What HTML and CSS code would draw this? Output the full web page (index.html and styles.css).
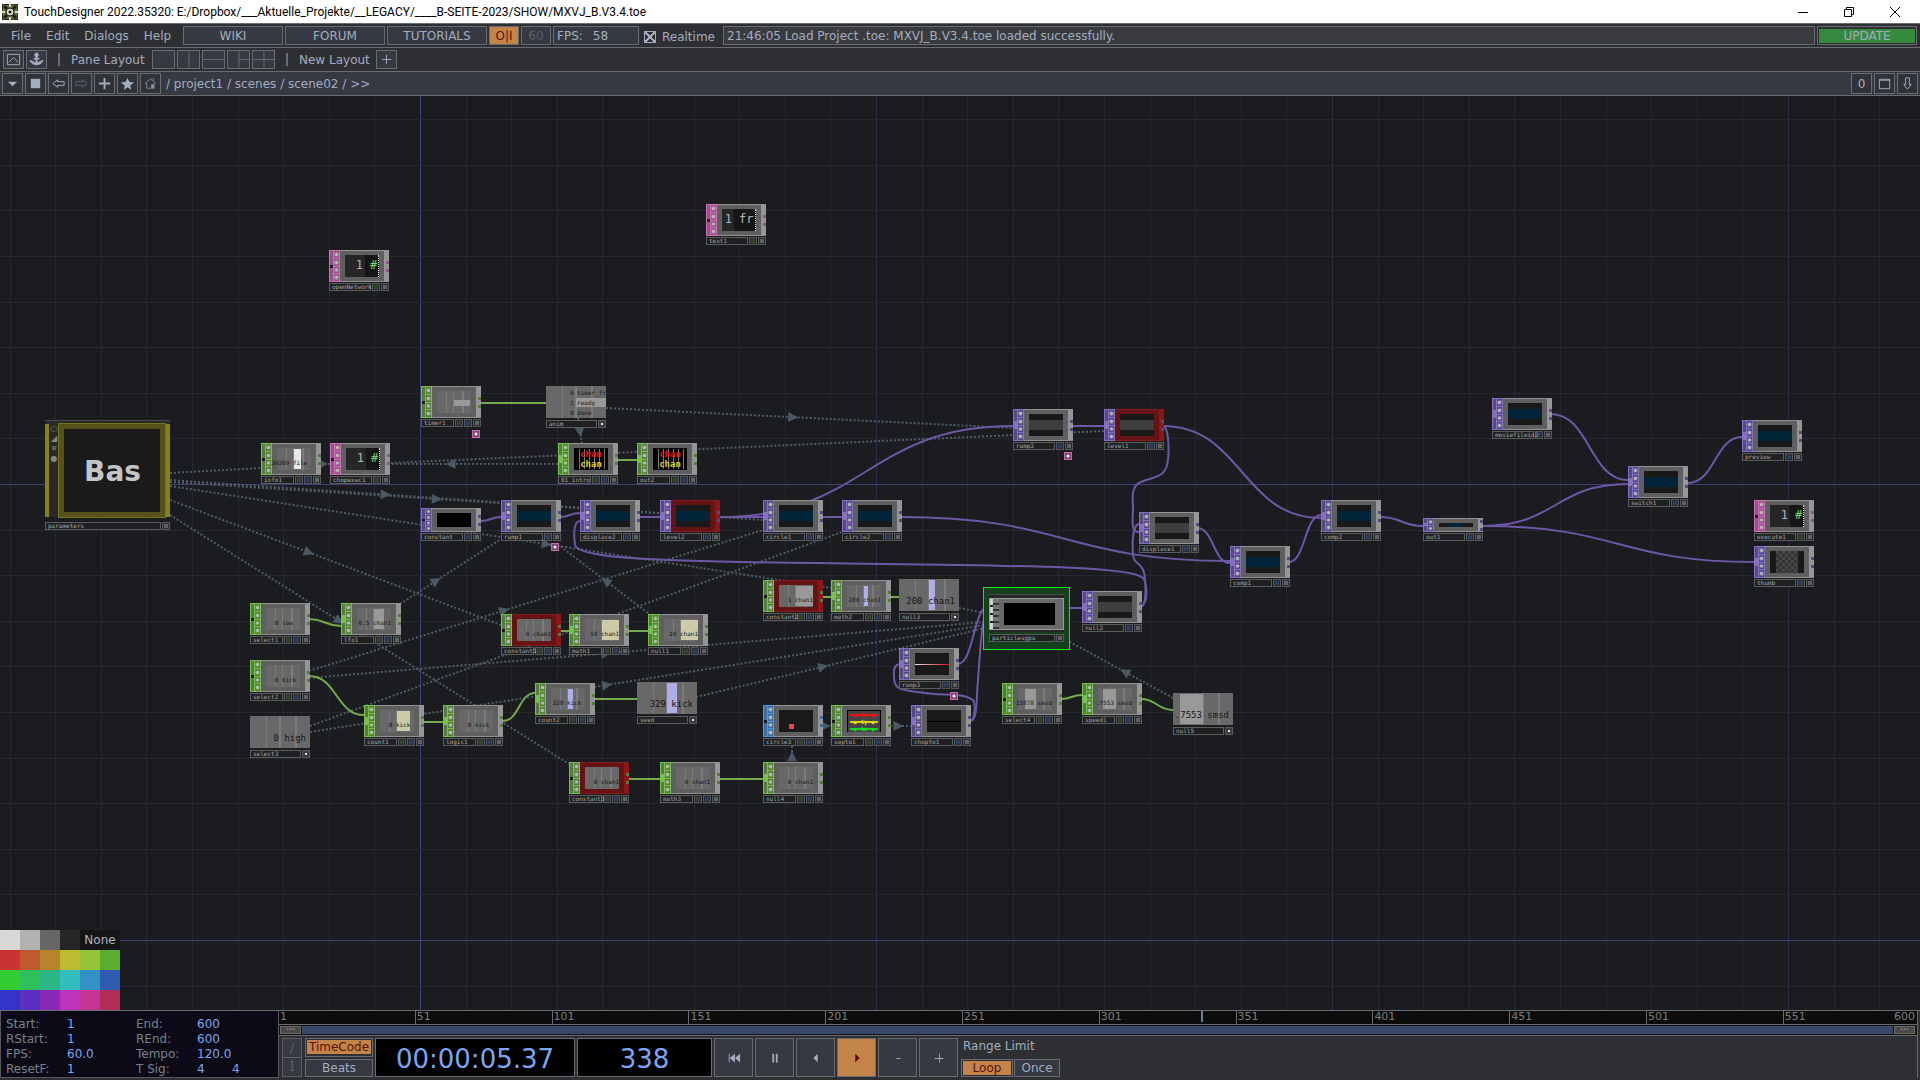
FILE: index.html
```html
<!DOCTYPE html>
<html lang="en">
<head>
    <meta charset="UTF-8">
    <meta name="viewport" content="width=device-width, initial-scale=1.0">
    <title>TouchDesigner</title>
    <link rel="stylesheet" href="styles.css">
</head>
<body>
    <!-- Window title bar -->
    <header class="titlebar">
        <svg class="app-icon" viewBox="0 0 16 16">
            <rect width="16" height="16" fill="#5f6f3f"/>
            <path d="M2 2l12 12M14 2L2 14" stroke="#1b2010" stroke-width="3"/>
            <circle cx="8" cy="8" r="4" fill="#d8dcc8" stroke="#1b2010" stroke-width="1"/>
            <circle cx="8" cy="8" r="1" fill="#1b2010"/>
            <path d="M8 0v3M8 13v3M0 8h3M13 8h3" stroke="#d8dcc8" stroke-width="2"/>
        </svg>
        <h1>TouchDesigner 2022.35320: E:/Dropbox/___Aktuelle_Projekte/__LEGACY/____B-SEITE-2023/SHOW/MXVJ_B.V3.4.toe</h1>
        <div class="window-buttons">
            <button aria-label="Minimize"><svg viewBox="0 0 10 10"><path d="M0 5.500h10"/></svg></button>
            <button aria-label="Restore"><svg viewBox="0 0 10 10"><path d="M.5 2.500h7v7h-7zM2.500 2.500v-2h7v7h-2"/></svg></button>
            <button aria-label="Close"><svg viewBox="0 0 10 10"><path d="M0 0l10 10M10 0L0 10"/></svg></button>
        </div>
    </header>

    <!-- Main menu -->
    <div class="row menu-row">
        <nav class="menu">
            <a href="#">File</a>
            <a href="#">Edit</a>
            <a href="#">Dialogs</a>
            <a href="#">Help</a>
        </nav>
        <button class="box wide">WIKI</button>
        <button class="box wide">FORUM</button>
        <button class="box wide">TUTORIALS</button>
        <button class="box on power">O|I</button>
        <button class="box dim power">60</button>
        <div class="box fps"><span>FPS:</span><span>58</span></div>
        <label class="realtime"><input type="checkbox" checked>Realtime</label>
        <div class="box message">21:46:05 Load Project .toe: MXVJ_B.V3.4.toe loaded successfully.</div>
        <button class="box wide update"><span>UPDATE</span></button>
    </div>

    <!-- Pane layouts -->
    <div class="row layout-row">
        <button class="box tool" aria-label="Palette"><svg viewBox="0 0 16 16"><path d="M1.500 2.500h13v11h-13zM3 11l5-5 5 5"/></svg></button>
        <button class="box tool" aria-label="Anchor"><svg viewBox="0 0 16 16"><circle cx="8" cy="3" r="2" fill="#a3adc0"/><path d="M8 4v10M5 7h6" stroke-width="2"/><path d="M1 9c2 6 12 6 14 0l-3 1c-2 2-6 2-8 0z" fill="#a3adc0"/></svg></button>
        <i class="divider"></i>
        <span class="pane-text">Pane Layout</span>
        <div class="panes">
            <button class="box pane" aria-label="Single"></button>
            <button class="box pane" aria-label="Left right"><svg viewBox="0 0 22 17"><path d="M11.500 0v17"/></svg></button>
            <button class="box pane" aria-label="Top bottom"><svg viewBox="0 0 22 17"><path d="M0 8.500h22"/></svg></button>
            <button class="box pane" aria-label="Three"><svg viewBox="0 0 22 17"><path d="M11.500 0v17M11 8.500h11"/></svg></button>
            <button class="box pane" aria-label="Four"><svg viewBox="0 0 22 17"><path d="M11.500 0v17M0 8.500h22"/></svg></button>
        </div>
        <i class="divider"></i>
        <span class="new-text">New Layout</span>
        <button class="box tool" aria-label="Add layout"><svg viewBox="0 0 16 16"><path d="M8 3v10M3 8h10"/></svg></button>
    </div>

    <!-- Network path -->
    <div class="row path-row">
        <button class="box tool" aria-label="Pane type"><svg viewBox="0 0 16 16"><path d="M3 6h10l-5 5z" fill="#a3adc0" stroke="none"/></svg></button>
        <button class="box tool" aria-label="Stop"><svg viewBox="0 0 16 16"><path d="M3 3h10v10H3z" fill="#a3adc0" stroke="none"/></svg></button>
        <button class="box tool" aria-label="Back"><svg viewBox="0 0 16 16"><path d="M2 8l5-4v2h7v4H7v2z"/></svg></button>
        <button class="box tool dim" aria-label="Forward"><svg viewBox="0 0 16 16"><path d="M14 8L9 4v2H2v4h7v2z"/></svg></button>
        <button class="box tool" aria-label="Add"><svg viewBox="0 0 16 16"><path d="M8 2v12M2 8h12" stroke-width="2"/></svg></button>
        <button class="box tool" aria-label="Bookmarks"><svg viewBox="0 0 16 16"><path d="M8 2l2 4 5 1-4 3 1 5-4-3-4 3 1-5-4-3 5-1z" fill="#a3adc0" stroke="none"/></svg></button>
        <button class="box tool home" aria-label="Home"><svg viewBox="0 0 16 16"><path d="M2 8l6-5 6 5M4 7v6h8V7M11 5V2"/><path d="M9 9h2v4H9z" fill="#a3adc0"/></svg></button>
        <nav class="crumbs">
            / <a href="#">project1</a> / <a href="#">scenes</a> / <a href="#">scene02</a> / &gt;&gt;
        </nav>
        <button class="box tool">0</button>
        <button class="box tool" aria-label="Maximize"><svg viewBox="0 0 16 16"><path d="M2.500 3.500h11v10h-11zM2 4.500h12"/></svg></button>
        <button class="box tool" aria-label="Down"><svg viewBox="0 0 16 16"><path d="M8 14l-4-5h2V2h4v7h2z"/></svg></button>
    </div>

    <!-- Network editor, filled by network.js -->
    <main class="network" id="network">
        <svg class="wires" id="wires"></svg>
        <div class="palette" id="palette"></div>
    </main>

    <!-- Timeline -->
    <footer class="timeline">
        <dl class="settings">
            <dt>Start:</dt><dd>1</dd><dt>End:</dt><dd>600</dd>
            <dt>RStart:</dt><dd>1</dd><dt>REnd:</dt><dd>600</dd>
            <dt>FPS:</dt><dd>60.0</dd><dt>Tempo:</dt><dd>120.0</dd>
            <dt>ResetF:</dt><dd>1</dd><dt>T Sig:</dt><dd class="sig"><span>4</span><span>4</span></dd>
        </dl>
        <div class="transport">
            <div class="ruler" id="ruler"></div>
            <div class="range"><b>···</b><i></i><b>···</b></div>
            <div class="controls">
                <div class="modes"><button>/</button><button>I</button></div>
                <div class="units">
                    <button class="box framed on"><span>TimeCode</span></button>
                    <button class="box framed"><span>Beats</span></button>
                </div>
                <output class="display time">00:00:05.37</output>
                <output class="display frame">338</output>
                <button class="box key" aria-label="Rewind"><svg viewBox="0 0 16 16"><path d="M2 3h1v10H2zM9 3v10L3 8zM15 3v10L9 8z"/></svg></button>
                <button class="box key" aria-label="Pause"><svg viewBox="0 0 16 16"><path d="M5 3h2v10H5zM9 3h2v10H9z"/></svg></button>
                <button class="box key" aria-label="Play backward"><svg viewBox="0 0 16 16"><path d="M10 3v10L5 8z"/></svg></button>
                <button class="box key on" aria-label="Play"><svg viewBox="0 0 16 16"><path d="M6 3v10l5-5z"/></svg></button>
                <button class="box key" aria-label="Step back"><svg viewBox="0 0 16 16"><path d="M6 8h5v1H6z"/></svg></button>
                <button class="box key" aria-label="Step forward"><svg viewBox="0 0 16 16"><path d="M3 8h10v1H3zM8 3h1v10H8z"/></svg></button>
                <div class="limit">
                    <span>Range Limit</span>
                    <div class="limit-buttons">
                        <button class="box framed on"><span>Loop</span></button>
                        <button class="box framed"><span>Once</span></button>
                    </div>
                </div>
            </div>
        </div>
    </footer>

    <script src="network.js"></script>
</body>
</html>
```
FILE: styles.css
```css
* {
    margin: 0;
    padding: 0;
    box-sizing: border-box;
}

body {
    height: 100vh;
    display: flex;
    flex-direction: column;
    background-color: #2e2f32;
    color: #a3adc0;
    font-family: "DejaVu Sans", sans-serif;
    font-size: 12px;
    overflow: hidden;
}

button {
    font: inherit;
    color: inherit;
    background: none;
    border: none;
    cursor: pointer;
}

a {
    color: inherit;
    text-decoration: none;
}

svg {
    display: block;
    fill: none;
    stroke: currentColor;
}

/* Title bar */
.titlebar {
    height: 23px;
    flex: none;
    display: flex;
    align-items: center;
    gap: 6px;
    padding-left: 2px;
    background-color: #fff;
    color: #000;
}

.titlebar h1 {
    flex: 1;
    font: 12px Roboto, sans-serif;
    white-space: nowrap;
}

.app-icon {
    width: 16px;
    height: 16px;
}

.window-buttons {
    display: flex;
    padding-right: 2px;
}

.window-buttons button {
    width: 46px;
    height: 20px;
    display: flex;
    justify-content: center;
    align-items: center;
}

.window-buttons svg {
    width: 10px;
    height: 10px;
}

/* Toolbars */
.row {
    height: 24px;
    flex: none;
    display: flex;
    align-items: center;
    gap: 2px;
    padding: 0 3px;
    border-top: 1px solid #696c70;
    white-space: nowrap;
}

.box {
    height: 19px;
    display: flex;
    justify-content: center;
    align-items: center;
    background-color: #363942;
    border: 1px solid #696c70;
}

.box.on {
    background-color: #c28449;
    color: #5c1208;
}

.box.dim {
    color: #5d626c;
}

.menu {
    display: flex;
    gap: 15px;
    width: 178px;
    padding-left: 8px;
}

.wide {
    width: 100px;
}

.power {
    width: 30px;
}

.fps {
    width: 86px;
    justify-content: flex-start;
    gap: 10px;
    padding-left: 3px;
}

.realtime {
    width: 80px;
    display: flex;
    align-items: center;
    gap: 6px;
    padding: 2px 0 0 3px;
}

.realtime input {
    appearance: none;
    width: 12px;
    height: 12px;
    border: 1px solid #a3adc0;
    background: linear-gradient(45deg, transparent 42%, #a3adc0 42% 58%, transparent 58%),
        linear-gradient(135deg, transparent 42%, #a3adc0 42% 58%, transparent 58%);
    background-color: #2e2f32;
}

.message {
    flex: 1;
    justify-content: flex-start;
    padding-left: 3px;
    background-color: #3a3b3e;
}

.update {
    padding: 1px;
    background-color: #2e2f32;
}

.update span {
    flex: 1;
    background-color: #37893f;
}

.tool {
    width: 21px;
    flex: none;
}

.tool svg {
    width: 15px;
    height: 15px;
}

.divider {
    width: 2px;
    height: 13px;
    margin: 0 9px;
    background-color: #696c70;
}

.pane-text {
    width: 79px;
}

.new-text {
    width: 75px;
}

.panes {
    display: flex;
    gap: 2px;
}

.pane {
    width: 23px;
    color: #696c70;
}

.pane svg {
    width: 100%;
    height: 100%;
}

.path-row {
    height: 25px;
    padding: 0 2px;
    background-color: #363942;
    border-bottom: 1px solid #696c70;
}

.path-row .tool {
    height: 21px;
    background-color: #303238;
}

.path-row .home {
    color: #7c8494;
}

.crumbs {
    flex: 1;
    padding-left: 3px;
}

/* Network editor */
.network {
    flex: 1;
    position: relative;
    overflow: hidden;
    background-color: #1b1c1f;
}

.wires {
    position: absolute;
    width: 100%;
    height: 100%;
}

.grid-line { stroke: #27282f; }
.grid-line.major { stroke: #2d2c4a; }
.grid-line.axis { stroke: #3d407a; }

.wire {
    stroke-width: 2;
}

.wire.top { stroke: #6d58a8; }
.wire.chop { stroke: #76ab49; }

.link {
    stroke: #4f5c68;
    stroke-width: 2;
    stroke-dasharray: 2 2;
}

.arrow {
    fill: #4b5965;
    stroke: none;
}

.node {
    position: absolute;
    width: 60px;
    font: 6px "DejaVu Sans Mono", monospace;
    white-space: pre;
}

.node-chop { --fill: #527d3b; --line: #78c04e; }
.node-top { --fill: #574986; --line: #8570c4; }
.node-dat { --fill: #96508a; --line: #cf6fb4; }
.node-sop { --fill: #3a6fa8; --line: #4c9ae0; }

.node-body {
    display: flex;
    height: 32px;
    margin-bottom: 1px;
    background-color: #5f5f5f;
    border-top: 1px solid #929292;
    border-bottom: 1px solid #929292;
}

.node-body.low { height: 24px; }
.node-body.flat { height: 14px; }

.node.red .node-body {
    background-color: #651315;
    border-color: #861a1c;
}

.inputs {
    width: 11px;
    display: flex;
    margin: -1px 0;
    background-color: var(--fill);
    border: 1px solid var(--line);
}

.inputs .port {
    width: 3px;
    background: linear-gradient(transparent 36%, var(--line) 36% 62%, transparent 62%);
}

.inputs.closed .port {
    background: linear-gradient(transparent 46%, #1b1c1f 46% 56%, transparent 56%);
}

.toggles {
    flex: 1;
    display: grid;
    gap: 1px;
    background-color: var(--line);
    border-left: 1px solid var(--line);
}

.toggles i {
    background: radial-gradient(circle, #b9c4b4 20%, var(--fill) 60%);
}

.node-view {
    width: 34px;
    margin: 4px 5px;
    flex: none;
    position: relative;
    overflow: hidden;
    color: #151515;
    text-align: right;
}

.output {
    width: 5px;
    display: flex;
    flex-direction: column;
    align-items: flex-end;
    justify-content: center;
    gap: 5px;
    background-color: #969696;
}

.output i {
    width: 3px;
    height: 3px;
    background-color: var(--fill);
}

.node.red .output {
    background-color: #8b1719;
}

.node-tag {
    display: flex;
    gap: 1px;
    height: 8px;
    color: #a8a8a8;
    line-height: 6px;
}

.node-tag span {
    flex: 1;
    width: 0;
    position: relative;
    padding-left: 2px;
    background-color: #1f2022;
    border: 1px solid #5b5c5e;
}

.node-tag i {
    width: 8px;
    background-color: #2b2c2e;
    border: 1px solid #565759;
    background-clip: padding-box;
    box-shadow: inset 0 0 0 1px #2b2c2e;
}

.node-tag .cook { background-color: #35452c; }
.node-tag .display { background-color: #293f66; }
.node-tag .view { background-color: #606163; }
.node-tag .view.lit { background-color: #e0e0e0; box-shadow: inset 0 0 0 2px #3a3b3d; }

/* What a node's viewer shows */
.chop-view {
    overflow: visible;
    background: linear-gradient(90deg, transparent 26%, #7c7c7c 26% 29%, transparent 29% 48%, #7c7c7c 48% 51%, transparent 51% 75%, #7c7c7c 75% 78%, transparent 78%);
    background-color: #686868;
}

.chop-view .bar {
    position: absolute;
    top: 1px;
    bottom: 1px;
}

.chop-view .bar.short {
    top: 9px;
    bottom: 7px;
}

.chop-view p {
    position: absolute;
    right: 0;
    bottom: 4px;
}

.full .chop-view {
    width: 60px;
    height: 32px;
    margin: 0 0 2px;
    font-size: 9px;
}

.full .chop-view p {
    right: 4px;
    bottom: 5px;
}

.full .chop-view.list {
    font-size: 6px;
}

.full .chop-view.list .bar {
    top: 12px;
    bottom: 11px;
}

.full .chop-view.list p {
    right: 0;
    bottom: 0;
    text-align: left;
    line-height: 10px;
}

.image-view { background: linear-gradient(#191919 27%, #03253a 27% 73%, #191919 73%); }
.black-view { background-color: #000; }
.thin-view { background: linear-gradient(90deg, #191919 33%, #03253a 33% 66%, #191919 66%); }
.line-view { background: linear-gradient(#191919 48%, #000 48% 54%, #191919 54%); }

.ramp-view {
    background: linear-gradient(90deg, #e8dcdc, #e01515) no-repeat 0 50% / 100% 1px;
    background-color: #191919;
}

.dot-view {
    background: linear-gradient(#f04545, #f04545) no-repeat 10px 14px / 5px 5px;
    background-color: #191919;
}

.checker-view {
    background: linear-gradient(#191919 27%, transparent 27% 73%, #191919 73%),
        repeating-conic-gradient(#363636 0 25%, #464646 0 50%) 0 0 / 2px 2px;
}

.checker-view.tall {
    background: linear-gradient(90deg, #191919 18%, transparent 18% 82%, #191919 82%),
        repeating-conic-gradient(#333 0 25%, #474747 0 50%) 0 0 / 6px 6px;
}

.dat-view {
    display: flex;
    background-color: #161616;
    border-right: 1px dotted #ddd;
    font-size: 12px;
    line-height: 20px;
}

.dat-view b {
    width: 20px;
    padding-right: 2px;
    background-color: #262626;
    color: #b5b5b5;
    font-weight: normal;
}

.dat-view.wide-text b { width: 12px; }

.dat-view span {
    padding-left: 5px;
    color: #72d877;
}

.dat-view.wide-text span { color: #b5b5b5; }

.names-view {
    padding-top: 1px;
    background-color: #000;
    font-size: 9px;
    font-weight: bold;
    line-height: 10px;
    text-align: center;
}

.names-view p {
    margin: 0 1px;
    background: repeating-linear-gradient(90deg, #000 0 4px, #777 4px 5px);
}

.names-view.three { font-size: 6px; line-height: 7px; }
.red-text { color: #f01313; }
.yellow-text { color: #dcd516; }
.green-text { color: #12d824; }

.names-view.three p {
    background: linear-gradient(currentColor, currentColor) no-repeat 50% 50% / 28px 2px, #444;
}

.dock {
    position: absolute;
    width: 8px;
    height: 8px;
    background: radial-gradient(#eee 20%, #7c4670 50%);
    border: 1px solid #c568ac;
}

/* Parameters component */
.comp {
    position: absolute;
    width: 125px;
}

.comp-edge {
    height: 4px;
    background-color: #29292b;
    border-top: 1px solid #48484a;
}

.comp-body {
    display: flex;
    height: 93px;
    background-color: #858219;
    padding: 0 5px 0 4px;
}

.comp-icons {
    width: 10px;
    background-color: #29292c;
    color: #858585;
    text-align: center;
    font: 8px/10px "DejaVu Sans", sans-serif;
}

.comp-screen {
    flex: 1;
    display: flex;
    justify-content: center;
    align-items: center;
    padding: 2px 0 0 1px;
    background-color: #1a1a1b;
    border: 5px solid #56531a;
    outline: 1px solid #76731a;
    color: #c4c4c4;
    font: bold 28px "DejaVu Sans", sans-serif;
}

.comp .node-tag,
.selected .node-tag {
    font: 6px/6px "DejaVu Sans Mono", monospace;
    margin-top: 5px;
}

/* Selected component */
.selected {
    position: absolute;
    width: 87px;
    height: 63px;
    padding: 6px 5px;
    background-color: #163f1b;
    border: 1px solid #0bef0b;
}

.selected-frame {
    padding: 3px 0 2px;
    background-color: #252628;
    border-top: 1px solid #4a4b4c;
}

.selected-screen {
    height: 32px;
    display: flex;
    background-color: #000;
    border: 4px solid #696969;
    border-width: 5px 9px 5px 0;
    outline: 1px solid #9a9a9a;
    outline-offset: -1px;
}

.selected-ports {
    width: 15px;
    margin: -4px 0;
    background: repeating-linear-gradient(#d0d0d0 0 6px, #222 6px 8px) no-repeat 0 0 / 4px 100%,
        repeating-linear-gradient(#777 0 4px, #333 4px 6px) no-repeat 4px 0 / 6px 100%;
    background-color: #696969;
}

.selected .node-tag {
    margin-top: 2px;
}

/* Colour palette */
.palette {
    position: absolute;
    left: 0;
    bottom: 0;
    width: 120px;
    display: grid;
    grid-template-columns: repeat(6, 20px);
    grid-auto-rows: 20px;
    z-index: 2;
}

.palette .none {
    grid-column: span 2;
    background-color: #151515;
    color: #b0b6c2;
}

/* Timeline */
.timeline {
    height: 70px;
    flex: none;
    display: flex;
    border-top: 1px solid #696c70;
    padding: 0 2px 2px 0;
}

.settings {
    width: 279px;
    display: grid;
    grid-template-columns: 61px 69px 61px 1fr;
    align-content: end;
    padding-left: 5px;
    line-height: 15px;
    background-color: #0b0a16;
    border: 1px solid #55575c;
    border-top: none;
    color: #75828d;
}

.settings dd {
    color: #7ca6f2;
}

.sig span {
    display: inline-block;
    width: 35px;
}

.transport {
    flex: 1;
    display: flex;
    flex-direction: column;
    border-right: 1px solid #696c70;
}

.ruler {
    height: 14px;
    display: flex;
    position: relative;
    background-color: #0c0c0c;
    border-bottom: 1px solid #696c70;
    color: #7c7c7c;
    font-size: 11px;
    line-height: 12px;
}

.ruler span {
    flex: 50 1 0;
    display: flex;
    justify-content: space-between;
    padding: 0 2px 0 1px;
    border-left: 1px solid #696c70;
}

.ruler span:first-child { border: none; }
.ruler span:last-of-type { flex-grow: 49; }
.ruler em { font-style: normal; }

.playhead {
    position: absolute;
    top: 0;
    width: 2px;
    height: 11px;
    background-color: #6a809f;
}

.range {
    display: flex;
    gap: 1px;
    height: 11px;
    padding: 1px 2px 1px 1px;
    background-color: #111;
    border-bottom: 1px solid #696c70;
}

.range i {
    flex: 1;
    background-color: #37486b;
}

.range b {
    width: 21px;
    background-color: #49494a;
    border: 1px solid #6c6d60;
    color: #8a8a8a;
    font-size: 8px;
    line-height: 6px;
    text-align: center;
}

.controls {
    flex: 1;
    display: flex;
    gap: 2px;
    padding: 2px 3px 1px;
}

.modes {
    width: 20px;
    margin-right: 1px;
    display: grid;
    border: 1px solid #5b5e63;
    background-color: #363942;
    color: #60646c;
}

.modes button + button {
    border-top: 1px solid #5b5e63;
    font-family: "DejaVu Serif", serif;
}

.units {
    width: 68px;
    display: flex;
    flex-direction: column;
    gap: 2px;
}

.units .box {
    flex: 1;
}

.framed {
    padding: 1px;
    height: 18px;
}

.framed.on {
    background-color: #2e2f32;
}

.framed span {
    flex: 1;
    line-height: 14px;
    background-color: #363942;
}

.framed.on span {
    background-color: #c28449;
}

.controls .display {
    display: flex;
    justify-content: center;
    align-items: center;
    padding-top: 2px;
    background-color: #000;
    border: 1px solid #696c70;
    color: #7ca6f2;
    font-size: 26px;
}

.controls .time { width: 200px; }
.controls .frame { width: 135px; }

.key {
    width: 39px;
    height: 100%;
}

.key svg {
    width: 14px;
    height: 14px;
    fill: currentColor;
    stroke: none;
}

.limit {
    display: flex;
    flex-direction: column;
    justify-content: space-between;
    padding: 1px 0 0 1px;
}

.limit span {
    padding: 0 2px;
}

.limit-buttons {
    display: flex;
    gap: 1px;
}

.limit-buttons .box {
    width: 52px;
}

.limit-buttons .box + .box {
    width: 46px;
}
```
FILE: network.js
```js
const TOP = 96; // height of the toolbars above the network
const network = document.getElementById('network');
const wires = document.getElementById('wires');

// family, name, x, y, viewer, options
const nodes = [
    ['dat', 'openNetwork', 329, 250, 'dat', { closed: 1 }],
    ['dat', 'text1', 706, 204, 'dat', { closed: 1, text: 'fr' }],
    ['chop', 'info1', 261, 443, 'chop', { closed: 1, text: '39269 file_', bar: [17, 7, '#e8e8e8'] }],
    ['dat', 'chopexec1', 330, 443, 'dat', { closed: 1 }],
    ['chop', 'timer1', 421, 386, 'chop', { closed: 1, bar: [17, 16, '#999', 1] }],
    ['chop', 'anim', 546, 386, 'full', { text: '0 timer_fr\n1 ready\n0 done', list: 1, bar: [30, 30, '#999'] }],
    ['chop', '01_intro', 558, 443, 'names', {}],
    ['chop', 'out2', 637, 443, 'names', {}],
    ['top', 'constant', 421, 508, 'black', { closed: 1, size: 'low' }],
    ['top', 'ramp1', 501, 500, 'image', {}],
    ['top', 'displace2', 580, 500, 'image', {}],
    ['top', 'level2', 660, 500, 'image', { red: 1 }],
    ['top', 'circle1', 763, 500, 'image', {}],
    ['top', 'circle2', 842, 500, 'image', {}],
    ['chop', 'constant2', 763, 580, 'chop', { red: 1, closed: 1, text: '1 chan1', bar: [17, 17, '#999'] }],
    ['chop', 'math2', 831, 580, 'chop', { text: '200 chan1', bar: [17, 4, '#b0aee8'] }],
    ['chop', 'null3', 899, 579, 'full', { text: '200 chan1', bar: [30, 6, '#b0aee8'] }],
    ['chop', 'constant1', 501, 614, 'chop', { red: 1, closed: 1, text: '0 chan1' }],
    ['chop', 'math1', 569, 614, 'chop', { text: '10 chan1', bar: [17, 17, '#cdcba8'] }],
    ['chop', 'null1', 648, 614, 'chop', { text: '10 chan1', bar: [17, 17, '#cdcba8'] }],
    ['chop', 'select1', 250, 603, 'chop', { closed: 1, text: '0 low  ' }],
    ['chop', 'lfo1', 341, 603, 'chop', { text: '0.5 chan1', bar: [17, 10, '#999'] }],
    ['chop', 'select2', 250, 660, 'chop', { closed: 1, text: '0 kick ' }],
    ['chop', 'select3', 250, 716, 'full', { text: '0 high' }],
    ['chop', 'count1', 364, 705, 'chop', { text: '8 kick ', bar: [17, 13, '#cdcba8'] }],
    ['chop', 'logic1', 443, 705, 'chop', { text: '0 kick ' }],
    ['chop', 'count2', 535, 683, 'chop', { text: '329 kick ', bar: [17, 5, '#b0aee8'] }],
    ['chop', 'seed', 637, 682, 'full', { text: '329 kick', bar: [30, 10, '#b0aee8'] }],
    ['sop', 'circle3', 763, 705, 'dot', { closed: 1 }],
    ['chop', 'sopto1', 831, 705, 'names', { three: 1, closed: 1 }],
    ['top', 'chopto1', 911, 705, 'line', {}],
    ['chop', 'constant3', 569, 762, 'chop', { red: 1, closed: 1, text: '0 chan1' }],
    ['chop', 'math3', 660, 762, 'chop', { text: '0 chan1' }],
    ['chop', 'null4', 763, 762, 'chop', { text: '0 chan1' }],
    ['top', 'ramp3', 899, 648, 'ramp', {}],
    ['top', 'null2', 1082, 591, 'checker', {}],
    ['chop', 'select4', 1002, 683, 'chop', { closed: 1, text: '15878 smsd', bar: [7, 11, '#999'] }],
    ['chop', 'speed1', 1082, 683, 'chop', { text: '.7553 smsd', bar: [5, 13, '#999'] }],
    ['chop', 'null5', 1173, 693, 'full', { text: '.7553 smsd', bar: [7, 23, '#999'] }],
    ['top', 'displace1', 1139, 512, 'checker', {}],
    ['top', 'comp1', 1230, 546, 'image', {}],
    ['top', 'comp2', 1321, 500, 'image', {}],
    ['top', 'out1', 1423, 518, 'thin', { size: 'flat' }],
    ['top', 'ramp2', 1013, 409, 'checker', {}],
    ['top', 'level1', 1104, 409, 'checker', { red: 1 }],
    ['top', 'moviefilein2', 1492, 398, 'image', {}],
    ['top', 'switch1', 1628, 466, 'image', {}],
    ['top', 'preview', 1742, 420, 'image', {}],
    ['dat', 'execute1', 1754, 500, 'dat', { closed: 1 }],
    ['top', 'thumb', 1754, 546, 'checker', { tall: 1 }]
];

// x1, y1, x2, y2
const chopWires = [
    [481, 403, 546, 403], [617, 460, 637, 460], [822, 597, 831, 597], [890, 597, 899, 597],
    [560, 631, 569, 631], [628, 631, 648, 631], [309, 619, 341, 626], [309, 676, 364, 715],
    [423, 722, 443, 722], [503, 721, 535, 693], [594, 699, 637, 699], [628, 779, 660, 779],
    [719, 779, 763, 779], [1061, 699, 1082, 695], [1141, 699, 1173, 710]
];
const topWires = [
    [481, 521, 501, 517], [560, 517, 580, 513], [640, 517, 660, 517], [719, 517, 763, 517],
    [719, 517, 1013, 426], [822, 517, 842, 517], [901, 517, 1230, 561], [1197, 528, 1230, 563],
    [1072, 426, 1104, 426], [1163, 426, 1321, 518], [1289, 562, 1321, 515], [1380, 517, 1423, 526],
    [1483, 526, 1628, 484], [1483, 526, 1754, 562], [1551, 414, 1628, 480], [1688, 483, 1742, 437],
    [1070, 608, 1082, 608], [958, 664, 989, 606]
];
const loopWires = [
    'M1163 426C1169 427 1169 450 1168 460C1166 478 1155 476 1141 482C1130 486 1133 500 1133 510C1132 526 1132 532 1139 532',
    'M1141 607C1146 605 1146 590 1145 580C1145 562 1133 565 1133 555C1132 540 1133 525 1139 524',
    'M1141 607C1150 600 1146 582 1143 578C1128 564 980 566 740 562C640 560 578 557 575 545C573 530 575 521 580 521',
    'M970 721C978 721 976 700 978 680C981 640 982 612 990 606',
    'M970 721C975 720 976 705 973 700C962 692 945 696 925 693C900 690 893 690 894 675C893 668 896 664 901 664'
];

// x1, y1, x2, y2, where the arrow sits along the line
const links = [
    [170, 473, 261, 468], [170, 480, 660, 513, .44], [170, 482, 763, 520, .45], [170, 486, 831, 588, .57],
    [170, 500, 501, 625, .42], [170, 515, 341, 622, .99], [400, 604, 501, 539, .36], [358, 632, 569, 764],
    [309, 671, 763, 530, .43], [309, 678, 985, 622, .44], [310, 726, 842, 532], [310, 732, 985, 625, .44],
    [696, 697, 985, 628, .44], [959, 608, 985, 613], [648, 613, 560, 546, .48], [578, 418, 582, 444, .55],
    [606, 408, 1013, 428, .46], [1104, 431, 390, 463], [558, 464, 390, 464, .64], [316, 464, 330, 464, .5],
    [822, 726, 831, 726, .4], [890, 726, 911, 726, .4], [792, 764, 792, 738, .3], [1173, 698, 1068, 641, .46]
];

const docks = [[472, 430], [551, 543], [1064, 452], [950, 692]];

const colours = [
    '#d8d8d8', '#b2b2b2', '#666666', '#262626', null,
    '#cb3333', '#be5a2d', '#b8842b', '#bdbc31', '#93c436', '#59ad30',
    '#33cc33', '#2fbf5c', '#2ab685', '#33bdbd', '#3491c5', '#2e5aaf',
    '#3333cc', '#5b2fbf', '#8a29b5', '#bd33bd', '#c53491', '#af2e55'
];

function viewer(kind, o) {
    if (kind === 'chop' || kind === 'full') {
        const bar = o.bar ? `<div class="bar ${o.bar[3] ? 'short' : ''}" style="left:${o.bar[0]}px;width:${o.bar[1]}px;background:${o.bar[2]}"></div>` : '';
        return `<div class="node-view chop-view ${o.list ? 'list' : ''}">${bar}<p>${o.text || ''}</p></div>`;
    }
    if (kind === 'dat') {
        return `<div class="node-view dat-view ${o.text ? 'wide-text' : ''}"><b>1</b><span>${o.text || '#'}</span></div>`;
    }
    if (kind === 'names') {
        return o.three
            ? '<div class="node-view names-view three"><p class="red-text">● tx ●</p><p class="yellow-text">● ty ●</p><p class="green-text">● tz ●</p></div>'
            : '<div class="node-view names-view"><p class="red-text">chan</p><p class="yellow-text">chan</p></div>';
    }
    return `<div class="node-view ${kind}-view ${o.tall ? 'tall' : ''}"></div>`;
}

function tag(family, name, full) {
    let flags = '<i class="view"></i>';
    if (full) flags = '<i class="view lit"></i>';
    else if (family === 'chop' || family === 'sop') flags = '<i class="cook"></i><i class="display"></i>' + flags;
    else if (family === 'top') flags = '<i class="display"></i>' + flags;
    else if (family === 'dat') flags = '<i class="cook"></i>' + flags;
    return `<div class="node-tag"><span>${name}</span>${flags}</div>`;
}

function place(className, x, y, html) {
    const el = document.createElement('div');
    el.className = className;
    el.style.left = x + 'px';
    el.style.top = y - TOP + 'px';
    el.innerHTML = html;
    network.appendChild(el);
}

function curve([x1, y1, x2, y2]) {
    const mid = (x1 + x2) / 2;
    return `M${x1} ${y1}C${mid} ${y1} ${mid} ${y2} ${x2} ${y2}`;
}

// Grid: ten cells between the major lines
let svg = '';
for (let i = -9; i <= 33; i++) {
    const x = Math.round(421 + i * 45.6) - .5;
    const type = i === 0 ? 'axis' : i % 10 === 0 ? 'major' : '';
    svg += `<path class="grid-line ${type}" d="M${x} 0V4000"/>`;
}
for (let i = -8; i <= 11; i++) {
    const y = Math.round(484 + i * 45.6) + .5;
    svg += `<path class="grid-line ${i % 10 === 0 ? 'axis' : ''}" d="M0 ${y}H4000"/>`;
}
for (const [x1, y1, x2, y2, at] of links) {
    svg += `<path class="link" d="M${x1} ${y1}L${x2} ${y2}"/>`;
    if (at) {
        const angle = Math.atan2(y2 - y1, x2 - x1) * 180 / Math.PI;
        svg += `<path class="arrow" transform="translate(${x1 + (x2 - x1) * at} ${y1 + (y2 - y1) * at}) rotate(${angle})" d="M-5 -5L5 0L-5 5z"/>`;
    }
}
for (const w of chopWires) svg += `<path class="wire chop" d="${curve(w)}"/>`;
for (const w of topWires) svg += `<path class="wire top" d="${curve(w)}"/>`;
for (const d of loopWires) svg += `<path class="wire top" d="${d}"/>`;
wires.innerHTML = `<g transform="translate(0 ${-TOP})">${svg}</g>`;

for (const [family, name, x, y, kind, o] of nodes) {
    if (kind === 'full') {
        place('node full', x, y, viewer(kind, o) + tag(family, name, true));
        continue;
    }
    const toggles = o.size === 'flat' ? '<i></i><i></i>' : '<i></i><i></i><i></i><i></i>';
    // no whitespace between the parts: nodes are white-space: pre
    place(`node node-${family} ${o.red ? 'red' : ''}`, x, y,
        `<div class="node-body ${o.size || ''}"><div class="inputs ${o.closed ? 'closed' : ''}"><div class="port"></div><div class="toggles">${toggles}</div></div>`
        + viewer(kind, o) + '<div class="output"><i></i><i></i></div></div>' + tag(family, name));
}

place('comp', 45, 420,
    `<div class="comp-edge"></div>
    <div class="comp-body"><div class="comp-icons">○<br>◢<br>✕<br>●</div><div class="comp-screen">Bas</div></div>` + tag('comp', 'parameters'));
place('selected', 983, 587,
    '<div class="selected-frame"><div class="selected-screen"><div class="selected-ports"></div></div></div>' + tag('comp', 'particlesgpu'));
for (const [x, y] of docks) place('dock', x, y, '');

document.getElementById('palette').innerHTML = colours.map(c =>
    c ? `<button style="background:${c}" aria-label="${c}"></button>` : '<button class="none">None</button>').join('');

// Ruler: one cell for every fifty frames
let cells = '';
for (let f = 1; f < 600; f += 50) {
    cells += `<span>${f}${f === 551 ? '<em>600</em>' : ''}</span>`;
}
document.getElementById('ruler').innerHTML = cells + `<i class="playhead" style="left:${(337 / 599 * 100).toFixed(2)}%"></i>`;
```
